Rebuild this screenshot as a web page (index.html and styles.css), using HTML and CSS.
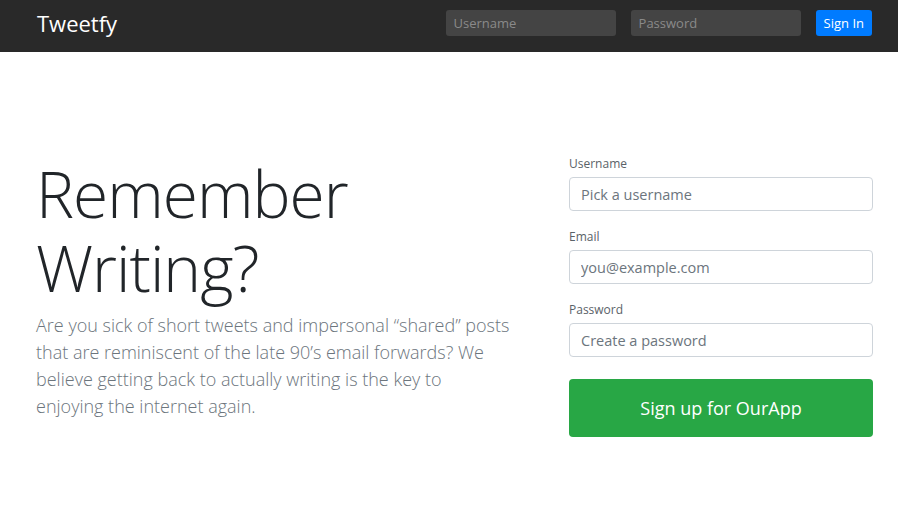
FILE: index.html
```html
<!DOCTYPE html>
<html lang="en">
<head>
<meta charset="utf-8">
<title>Tweetfy</title>
<link rel="stylesheet" href="styles.css">
</head>
<body>
<header class="topbar">
  <div class="brand">Tweetfy</div>
  <form class="login">
    <input class="nav-input" type="text" placeholder="Username">
    <input class="nav-input" type="password" placeholder="Password">
    <button class="btn-signin" type="button">Sign In</button>
  </form>
</header>
<main class="hero">
  <section class="intro">
    <h1 class="headline">Remember Writing?</h1>
    <p class="lead">Are you sick of short tweets and impersonal “shared” posts that are reminiscent of the late 90’s email forwards? We believe getting back to actually writing is the key to enjoying the internet again.</p>
  </section>
  <form class="signup">
    <div class="field">
      <label class="field-label">Username</label>
      <input class="field-input" type="text" placeholder="Pick a username">
    </div>
    <div class="field">
      <label class="field-label">Email</label>
      <input class="field-input" type="text" placeholder="you@example.com">
    </div>
    <div class="field">
      <label class="field-label">Password</label>
      <input class="field-input" type="password" placeholder="Create a password">
    </div>
    <button class="btn-signup" type="button">Sign up for OurApp</button>
  </form>
</main>
</body>
</html>
```
FILE: styles.css
```css
* { box-sizing: border-box; }
html, body { margin: 0; padding: 0; }
body {
  font-family: "Open Sans", "Noto Sans", sans-serif;
  background: #fff;
  color: #212529;
}
.topbar {
  height: 52px;
  background: #292929;
  display: flex;
  align-items: flex-start;
  justify-content: space-between;
  padding: 10px 26px 0 37px;
}
.brand {
  color: #fff;
  font-size: 22px;
  line-height: 26px;
  margin-top: 0;
}
.login {
  display: flex;
  align-items: center;
  gap: 15px;
}
.nav-input {
  width: 170px;
  height: 26px;
  background: #444;
  border: 0;
  border-radius: 3px;
  padding: 0 8px;
  font-family: inherit;
  font-size: 13px;
  color: #fff;
}
.nav-input::placeholder { color: #8a8a8a; }
.btn-signin {
  height: 26px;
  padding: 0 8px;
  background: #007bff;
  color: #fff;
  border: 0;
  border-radius: 3px;
  font-family: inherit;
  font-size: 13px;
}
.hero {
  display: flex;
  justify-content: space-between;
  padding: 102px 25px 0 36px;
}
.intro {
  width: 474px;
  padding-top: 3px;
}
.headline {
  margin: 0 0 7px;
  font-size: 64px;
  font-weight: 300;
  line-height: 1.16;
  letter-spacing: -1px;
}
.lead {
  margin: 0;
  font-size: 18px;
  font-weight: 300;
  line-height: 27px;
  color: #6c757d;
}
.signup {
  width: 304px;
  padding-top: 1px;
  display: flex;
  flex-direction: column;
}
.field { display: flex; flex-direction: column; margin-bottom: 17px; }
.field-label {
  font-size: 12px;
  line-height: 18px;
  margin-bottom: 4px;
  color: #5a6268;
}
.field-input {
  height: 34px;
  border: 1px solid #ced4da;
  border-radius: 4px;
  padding: 0 11px;
  font-family: inherit;
  font-size: 14.5px;
  color: #495057;
}
.field-input::placeholder { color: #6c757d; }
.btn-signup {
  margin-top: 5px;
  height: 58px;
  background: #28a745;
  color: #fff;
  border: 0;
  border-radius: 4px;
  font-family: inherit;
  font-size: 18px;
}
```
